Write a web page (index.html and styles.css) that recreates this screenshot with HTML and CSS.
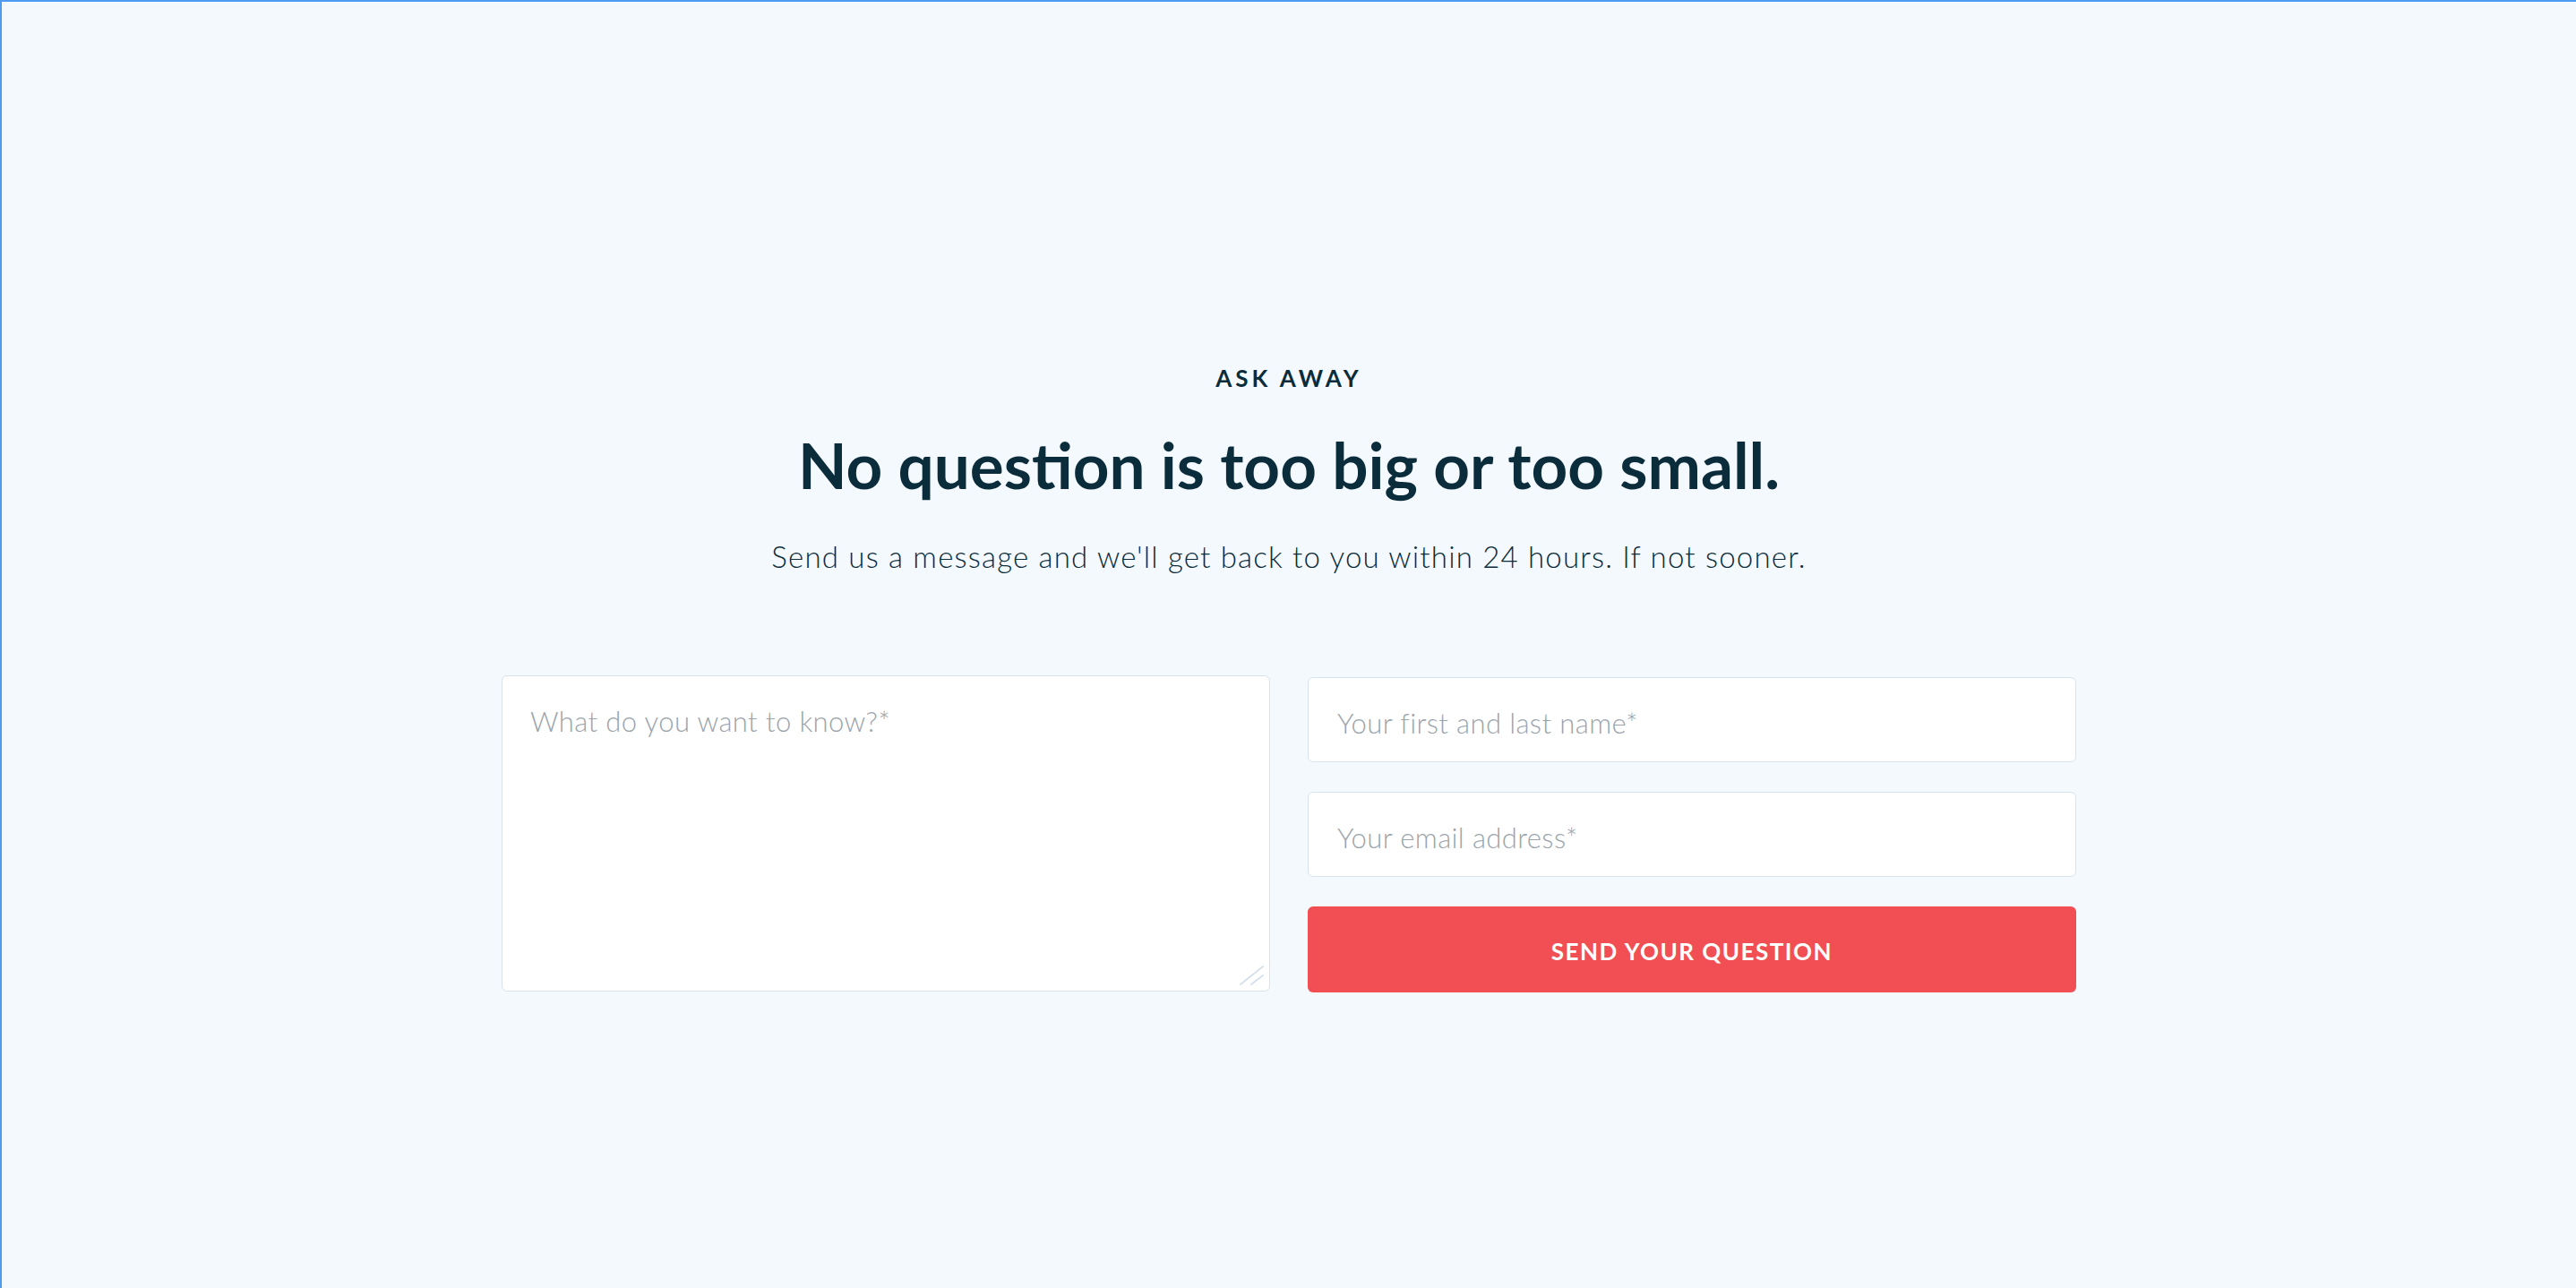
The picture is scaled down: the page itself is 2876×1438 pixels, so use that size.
FILE: index.html
```html
<!DOCTYPE html>
<html lang="en">
<head>
<meta charset="utf-8">
<title>Ask away</title>
<link rel="stylesheet" href="styles.css">
</head>
<body>
<main class="page">
  <section class="ask">
    <p class="eyebrow">ASK AWAY</p>
    <h1 class="title">No question is too big or too small.</h1>
    <p class="lead">Send us a message and we'll get back to you within 24 hours. If not sooner.</p>
    <form class="form">
      <div class="area">
        <textarea class="field question" placeholder="What do you want to know?*"></textarea>
        <svg class="grip" width="27" height="22" viewBox="0 0 27 22" aria-hidden="true">
          <line x1="1" y1="21" x2="26" y2="1" stroke="#d6e1eb" stroke-width="2" stroke-linecap="round"/>
          <line x1="13" y1="21" x2="26" y2="11" stroke="#d6e1eb" stroke-width="2" stroke-linecap="round"/>
        </svg>
      </div>
      <div class="side">
        <input class="field line" type="text" placeholder="Your first and last name*">
        <input class="field line" type="email" placeholder="Your email address*">
        <button class="send" type="button">SEND YOUR QUESTION</button>
      </div>
    </form>
  </section>
</main>
</body>
</html>
```

FILE: styles.css
```css
html, body {
  margin: 0;
  padding: 0;
  height: 100%;
}
body {
  background: #f4f9fe;
  font-family: Lato, "Noto Sans", sans-serif;
  color: #0b2c3b;
  box-sizing: border-box;
  border-top: 2px solid #4d9cf1;
  border-left: 2px solid #4d9cf1;
}
.page {
  min-height: 100%;
}
.ask {
  display: flex;
  flex-direction: column;
  align-items: center;
  padding-top: 404px;
}
.eyebrow {
  margin: 0;
  font-size: 26px;
  line-height: 32px;
  font-weight: 700;
  letter-spacing: 4px;
}
.title {
  margin: 39px 0 0;
  font-size: 71px;
  line-height: 84px;
  font-weight: 700;
}
.lead {
  margin: 40px 0 0;
  font-size: 33px;
  line-height: 40px;
  font-weight: 300;
  letter-spacing: 1.2px;
}
.form {
  margin-top: 113px;
  width: 1758px;
  display: grid;
  grid-template-columns: 1fr 1fr;
  column-gap: 42px;
}
.area {
  position: relative;
  display: flex;
}
.field {
  box-sizing: border-box;
  background: #fff;
  border: 1px solid #d9e3ec;
  border-radius: 6px;
  font-family: Lato, "Noto Sans", sans-serif;
  font-size: 31px;
  font-weight: 300;
  letter-spacing: 0.4px;
  color: #0b2c3b;
  outline: none;
}
.field::placeholder {
  color: #9aa4ad;
}
.question {
  width: 100%;
  height: 353px;
  padding: 31px 31px;
  resize: none;
  margin: 0;
}
.grip {
  position: absolute;
  right: 7px;
  bottom: 8px;
  pointer-events: none;
}
.side {
  display: flex;
  flex-direction: column;
  gap: 33px;
  padding-top: 2px;
}
.line {
  height: 95px;
  padding: 6px 32px 0;
  width: 100%;
}
.send {
  height: 96px;
  border: 0;
  border-radius: 6px;
  background: #f14f53;
  color: #fff;
  font-family: Lato, "Noto Sans", sans-serif;
  font-size: 26px;
  font-weight: 700;
  letter-spacing: 1.5px;
  padding: 4px 0 0;
}
```
